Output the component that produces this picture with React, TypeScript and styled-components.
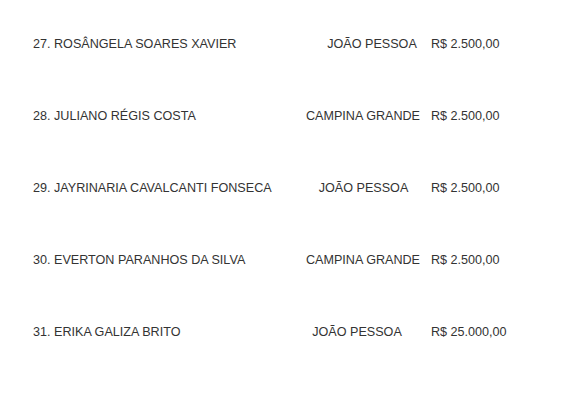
import React from 'react';
import styled, { createGlobalStyle } from 'styled-components';

const GlobalStyle = createGlobalStyle`
    html, body {
        margin: 0;
        padding: 0;
        background: #fff;
    }
`;

const List = styled.div`
    display: flex;
    flex-direction: column;
    padding: 27px 0 0 33px;
    width: 478px;
    font-family: "Liberation Sans", Arial, sans-serif;
    font-size: 12.6px;
    color: #333;
`;

const Row = styled.div`
    display: flex;
    align-items: center;
    height: 72px;
    box-sizing: border-box;
    padding-bottom: 38px;
`;

const Name = styled.div`
    flex: 1;
    white-space: nowrap;
`;

const City = styled.div<{ $width: number }>`
    width: ${p => p.$width}px;
    text-align: center;
    white-space: nowrap;
`;

const Price = styled.div`
    width: 80px;
    white-space: nowrap;
`;

const rows = [
    { n: '27. ROSÂNGELA SOARES XAVIER', city: 'JOÃO PESSOA', w: 118, price: 'R$ 2.500,00' },
    { n: '28. JULIANO RÉGIS COSTA', city: 'CAMPINA GRANDE', w: 136, price: 'R$ 2.500,00' },
    { n: '29. JAYRINARIA CAVALCANTI FONSECA', city: 'JOÃO PESSOA', w: 135, price: 'R$ 2.500,00' },
    { n: '30. EVERTON PARANHOS DA SILVA', city: 'CAMPINA GRANDE', w: 136, price: 'R$ 2.500,00' },
    { n: '31. ERIKA GALIZA BRITO', city: 'JOÃO PESSOA', w: 148, price: 'R$ 25.000,00' },
];

export default function App() {
    return (
        <>
            <GlobalStyle />
            <List>
                {rows.map(r => (
                    <Row key={r.n}>
                        <Name>{r.n}</Name>
                        <City $width={r.w}>{r.city}</City>
                        <Price>{r.price}</Price>
                    </Row>
                ))}
            </List>
        </>
    );
}
